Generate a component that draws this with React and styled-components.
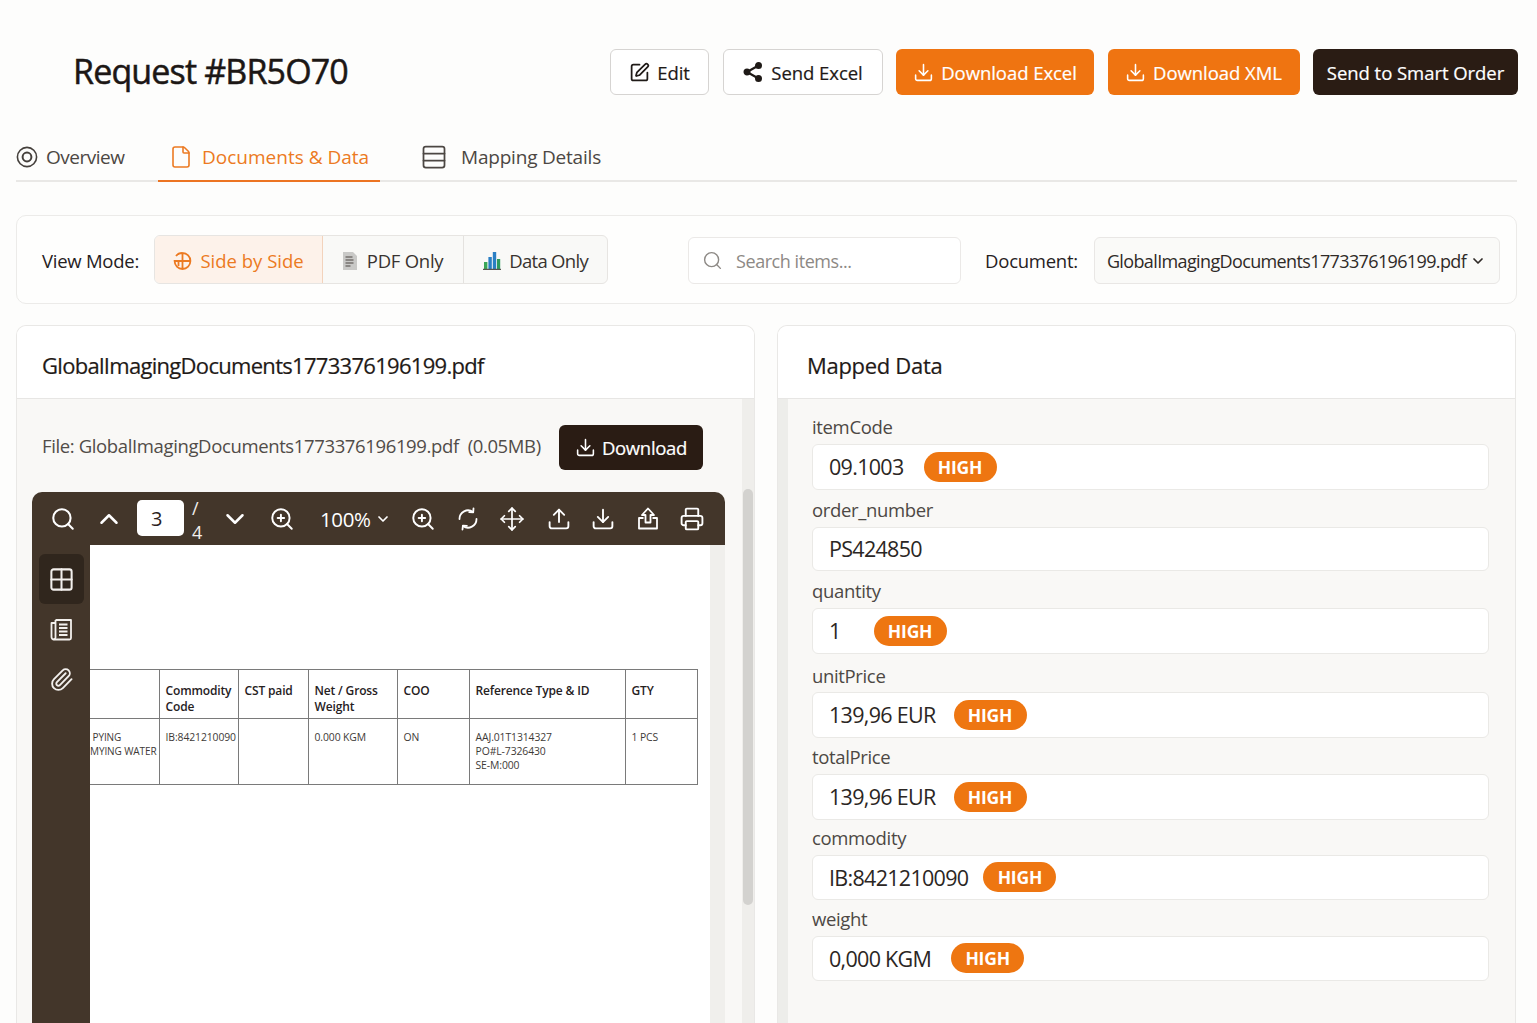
import React from 'react';
import styled, { createGlobalStyle } from 'styled-components';
import { SquarePen, Download, File, Rows3, Search, ChevronUp, ChevronDown, ZoomIn, Move, Upload, Printer, Grid2x2, Paperclip } from 'lucide-react';

const Global = createGlobalStyle`
  html, body { margin: 0; padding: 0; height: 1023px; overflow: hidden; background: #fdfdfc; }
  body { font-family: "Open Sans", "Noto Sans", sans-serif; color: #1f1a17; }
  * { box-sizing: border-box; }
`;

const Page = styled.div`
  height: 1023px;
  overflow: hidden;
  padding: 49px 19px 0 16px;
  display: flex;
  flex-direction: column;
`;
const Header = styled.header`
  display: flex;
  align-items: center;
  justify-content: space-between;
  height: 46px;
  padding-left: 57px;
`;
const Title = styled.h1`
  margin: 0;
  font-size: 34px;
  font-weight: 500;
  letter-spacing: -0.85px;
  color: #1c1715;
  -webkit-text-stroke: 0.5px #1c1715;
  position: relative;
  top: -1px;
`;
const Actions = styled.div`
  display: flex;
  gap: 13.5px;
`;
const ActionButton = styled.button`
  height: 46px;
  width: ${p => p.$w}px;
  display: flex;
  align-items: center;
  justify-content: center;
  gap: 7px;
  border-radius: 6px;
  font: 500 18.5px "Open Sans", sans-serif;
  letter-spacing: -0.05px;
  -webkit-text-stroke: 0.2px currentColor;
  padding: 0;
  border: ${p => (p.$kind === 'outline' ? '1.5px solid #d6d4d2' : 'none')};
  color: ${p => (p.$kind === 'outline' ? '#1f1a17' : '#fff')};
  background: ${p => (p.$kind === 'orange' ? '#ef7411' : p.$kind === 'dark' ? '#2a1c14' : '#fff')};
`;
const Tabs = styled.nav`
  margin: 38px 1px 0 0;
  height: 49px;
  display: flex;
  border-bottom: 2px solid #e9e8e6;
`;
const Tab = styled.div`
  display: flex;
  align-items: center;
  height: 49px;
  width: ${p => p.$w}px;
  margin-right: ${p => p.$mr}px;
  padding-left: ${p => p.$pl}px;
  padding-bottom: ${p => (p.$active ? 0 : 2)}px;
  gap: ${p => p.$gap}px;
  font-size: 19px;
  letter-spacing: ${p => p.$ls}px;
  color: ${p => (p.$active ? '#ec7a22' : '#4c4743')};
  border-bottom: ${p => (p.$active ? '2px solid #ec7422' : 'none')};
`;
const Toolbar = styled.section`
  margin: 33px 1px 0 0;
  height: 89px;
  border: 1.5px solid #ecebe9;
  border-radius: 10px;
  background: #fefefd;
  display: flex;
  align-items: center;
  padding: 0 16px 0 25px;
`;
const ModeLabel = styled.span`
  flex: none;
  font-size: 18.5px;
  letter-spacing: -0.25px;
  font-weight: 500;
  margin-right: 15px;
  padding-top: 2px;
  color: #26211e;
  white-space: nowrap;
`;
const Segments = styled.div`
  flex: none;
  display: flex;
  height: 49px;
  border: 1px solid #e7e5e2;
  border-radius: 6px;
  overflow: hidden;
  background: #f9f9f7;
`;
const Segment = styled.div`
  display: flex;
  align-items: center;
  justify-content: center;
  padding-top: 2px;
  gap: ${p => p.$gap}px;
  width: ${p => p.$w}px;
  font-size: 18.5px;
  letter-spacing: ${p => p.$ls}px;
  color: ${p => (p.$active ? '#ec7a22' : '#38332f')};
  background: ${p => (p.$active ? '#fdf2ea' : 'transparent')};
  border-right: 1px solid ${p => (p.$active ? '#f3d3bc' : '#e4e2df')};
  &:last-child { border-right: none; }
`;
const SearchBox = styled.div`
  flex: none;
  margin: 2px 0 0 80px;
  width: 273px;
  height: 47px;
  border: 1.5px solid #ebe9e7;
  border-radius: 6px;
  display: flex;
  align-items: center;
  gap: 13px;
  padding-left: 13px;
  font-size: 18px;
  letter-spacing: -0.45px;
  color: #8d8985;
  background: #fff;
`;
const DocLabel = styled.span`
  flex: none;
  margin-left: 24px;
  margin-right: 16px;
  padding-top: 2px;
  font-size: 18.5px;
  letter-spacing: -0.25px;
  font-weight: 500;
  color: #26211e;
`;
const DocSelect = styled.div`
  flex: 1;
  min-width: 0;
  margin-top: 2px;
  height: 47px;
  border: 1.5px solid #e9e7e5;
  border-radius: 6px;
  background: #fafaf8;
  display: flex;
  align-items: center;
  justify-content: space-between;
  padding: 0 13px 0 12px;
  font-size: 18px;
  letter-spacing: -0.63px;
  color: #2f2a27;
  white-space: nowrap;
`;
const Panels = styled.main`
  margin-top: 21px;
  display: grid;
  grid-template-columns: 739px 739px;
  column-gap: 22px;
  flex: 1;
  min-height: 0;
`;
const Panel = styled.section`
  height: 720px;
  border: 1.5px solid #e9e8e6;
  border-bottom: none;
  border-radius: 10px 10px 0 0;
  background: #f9f8f6;
  display: flex;
  flex-direction: column;
  overflow: hidden;
`;
const PanelHead = styled.div`
  height: 73px;
  flex: none;
  background: #fff;
  border-bottom: 1.5px solid #e7e6e4;
  display: flex;
  align-items: center;
  padding: 5px 0 0 ${p => p.$pl}px;
  font-size: 22px;
  font-weight: 500;
  letter-spacing: ${p => p.$ls}px;
  -webkit-text-stroke: 0.2px #1f1a17;
  color: #1f1a17;
`;
const LeftBody = styled.div`
  flex: 1;
  display: flex;
  min-height: 0;
`;
const LeftContent = styled.div`
  flex: 1;
  padding: 26px 0 0 15px;
  min-width: 0;
`;
const FileRow = styled.div`
  display: flex;
  align-items: center;
  height: 45px;
  padding: 0 39px 0 10px;
  justify-content: space-between;
`;
const FileText = styled.span`
  font-size: 18.5px;
  letter-spacing: -0.37px;
  color: #514c48;
  white-space: pre;
  padding-bottom: 4px;
`;
const DownloadButton = styled.button`
  width: 144px;
  height: 45px;
  border: none;
  border-radius: 6px;
  background: #2a1c14;
  color: #fff;
  display: flex;
  align-items: center;
  justify-content: center;
  gap: 6px;
  font: 500 18.5px "Open Sans", sans-serif;
  letter-spacing: -0.3px;
  -webkit-text-stroke: 0.2px #fff;
`;
const Scrollbar = styled.div`
  width: 12px;
  flex: none;
  background: #efeeeb;
  position: relative;
`;
const Thumb = styled.div`
  position: absolute;
  left: 1px;
  right: 1px;
  top: 90px;
  height: 416px;
  background: #d3d2cf;
  border-radius: 5px;
`;
const Viewer = styled.div`
  margin-top: 22px;
  width: 693px;
  height: 540px;
  border-radius: 10px 10px 0 0;
  overflow: hidden;
  background: #43362a;
  display: flex;
  flex-direction: column;
`;
const ViewerBar = styled.div`
  height: 53px;
  flex: none;
  display: flex;
  align-items: center;
  color: #fff;
  position: relative;
`;
const BarIcon = styled.span`
  position: absolute;
  left: ${p => p.$x}px;
  top: 50%;
  transform: translate(-50%, -50%);
  display: flex;
`;
const PageInput = styled.div`
  position: absolute;
  left: 105px;
  top: 8px;
  width: 47px;
  height: 36px;
  background: #fff;
  border-radius: 5px;
  color: #2a211b;
  font-size: 20px;
  display: flex;
  align-items: center;
  padding-left: 14px;
`;
const PageTotal = styled.div`
  position: absolute;
  left: 160px;
  top: 4px;
  width: 12px;
  font-size: 18px;
  line-height: 24px;
  color: #f2efec;
`;
const ZoomValue = styled.div`
  position: absolute;
  left: 288px;
  top: 50%;
  transform: translateY(-50%);
  font-size: 20.5px;
  letter-spacing: -0.4px;
  display: flex;
  align-items: center;
  gap: 4px;
  color: #fff;
`;
const ViewerMain = styled.div`
  flex: 1;
  display: flex;
  min-height: 0;
`;
const Side = styled.div`
  width: 58px;
  flex: none;
  display: flex;
  flex-direction: column;
  align-items: center;
  padding-top: 9px;
  color: #f3f0ed;
`;
const SideButton = styled.div`
  width: 45px;
  height: ${p => p.$h}px;
  border-radius: 6px;
  background: ${p => (p.$active ? '#30261d' : 'transparent')};
  display: flex;
  align-items: center;
  justify-content: center;
`;
const Sheet = styled.div`
  flex: 1;
  background: #fff;
  padding-top: 124px;
`;
const PdfTable = styled.table`
  width: 607px;
  height: 116px;
  table-layout: fixed;
  border-collapse: collapse;
  font-family: "Open Sans", sans-serif;
  th, td { border: 1.5px solid #7a7a7a; vertical-align: top; text-align: left; white-space: nowrap; }
  th { height: 49px; padding: 13px 0 0 6px; font-size: 12px; line-height: 16px; font-weight: 600; color: #26211e; letter-spacing: -0.15px; }
  td { padding: 11px 0 0 6px; font-size: 10.4px; line-height: 14px; color: #3e3a37; letter-spacing: -0.1px; }
  td:first-child { padding-left: 0; border-left: none; font-size: 10px; letter-spacing: -0.1px; }
  th:first-child { border-left: none; }
`;
const PageGutter = styled.div`
  width: 15px;
  flex: none;
  background: #f0efec;
`;
const RightBody = styled.div`
  flex: 1;
  display: flex;
  min-height: 0;
`;
const Strip = styled.div`
  width: 10px;
  flex: none;
  background: #ededea;
`;
const Fields = styled.div`
  flex: 1;
  padding: 15px 26px 0 24px;
`;
const Field = styled.div`
  height: ${p => p.$h}px;
`;
const FieldLabel = styled.div`
  font-size: 18.5px;
  line-height: 25px;
  letter-spacing: -0.35px;
  color: #4d4844;
  margin-bottom: ${p => p.$mb}px;
`;
const FieldBox = styled.div`
  height: ${p => p.$h}px;
  border: 1.5px solid #eae9e6;
  border-radius: 6px;
  background: #fff;
  display: flex;
  align-items: center;
  padding: 0 0 1px 16px;
  gap: ${p => p.$gap}px;
  font-size: 21.5px;
  letter-spacing: -0.7px;
  color: #2b2623;
`;
const Badge = styled.span`
  width: 73px;
  height: 30px;
  border-radius: 15px;
  background: #ee7611;
  color: #fff;
  font-size: 17.5px;
  font-weight: 700;
  letter-spacing: -0.2px;
  display: flex;
  align-items: center;
  justify-content: center;
`;

const Ico = ({ I, s = 24, w = 2 }) => <I size={s} strokeWidth={w} />;

const ShareIcon = () => (
  <svg width="22" height="22" viewBox="0 0 22 22" fill="#1f1a17" stroke="#1f1a17" strokeWidth="2.2">
    <path d="M16.5 4.5 5 11l11.5 6.5" fill="none" />
    <circle cx="16.5" cy="4.5" r="2.4" /><circle cx="5" cy="11" r="2.4" /><circle cx="16.5" cy="17.5" r="2.4" />
  </svg>
);
const TargetIcon = () => (
  <svg width="22" height="22" viewBox="0 0 22 22" fill="none" stroke="#45403c" strokeWidth="1.6">
    <circle cx="11" cy="11" r="9.6" /><circle cx="11" cy="11" r="4.4" strokeWidth="2" />
  </svg>
);
const SplitIcon = () => (
  <svg width="19" height="20" viewBox="0 0 19 20" fill="none" stroke="#ec7a22" strokeWidth="1.8">
    <path d="M3 5A7.9 7.9 0 0 1 9.5 2a7.9 7.9 0 0 1 7.9 8 7.9 7.9 0 0 1-7.9 8A7.9 7.9 0 0 1 1.6 10H17.4M9.5 2v16" />
    <path d="M5.5 10v5" />
  </svg>
);
const PdfIcon = () => (
  <svg width="14" height="18" viewBox="0 0 14 18">
    <path d="M0 0h10l4 4v14H0z" fill="#c9c9c7" />
    <path d="M2.5 5h7M2.5 8h8M2.5 11h8M2.5 14h5" stroke="#75726f" strokeWidth="1.3" />
  </svg>
);
const ChartIcon = () => (
  <svg width="18" height="18" viewBox="0 0 18 18">
    <rect x="1" y="10" width="3.4" height="7" fill="#3aa657" />
    <rect x="5.4" y="5" width="3.4" height="12" fill="#2a7fc4" />
    <rect x="9.8" y="0" width="3.4" height="17" fill="#2a7fc4" />
    <rect x="14" y="7" width="3.2" height="10" fill="#2f9a5f" />
    <rect x="0" y="16.8" width="18" height="1.2" fill="#57534f" />
  </svg>
);
const BookIcon = () => (
  <svg width="25" height="25" viewBox="0 0 25 25" fill="none" stroke="#f3f0ed" strokeWidth="1.8" strokeLinejoin="round">
    <path d="M6.5 3h15.5v18a1.5 1.5 0 0 1-1.5 1.5H5A2.5 2.5 0 0 1 2.5 20V6H6.5" />
    <path d="M6.5 3v17a2 2 0 0 1-2 2.4" />
    <path d="M10 7.5h8.5M10 11h8.5M10 14.5h8.5M10 18h8.5" />
  </svg>
);
const SyncIcon = () => (
  <svg width="24" height="24" viewBox="0 0 24 24" fill="none" stroke="#fff" strokeWidth="1.8" strokeLinecap="round" strokeLinejoin="round">
    <path d="M20.5 12a8.5 8.5 0 0 1-13.5 7" />
    <path d="M3.5 12A8.5 8.5 0 0 1 17 5" />
    <path d="M17.5 1.5 17.2 5.4l-4-.2" />
    <path d="M6.5 22.5l.4-3.9 4 .2" />
  </svg>
);
const BoxUpIcon = () => (
  <svg width="25" height="25" viewBox="0 0 25 25" fill="none" stroke="#fff" strokeWidth="1.8" strokeLinejoin="round">
    <path d="M12.5 2 6.5 8.5H10V16h5V8.5h3.5z" />
    <path d="M8 11.5H3.5V22h18V11.5H17" />
  </svg>
);

const toolbarIcons = [
  [31, Search, 26, 1.9], [77, ChevronUp, 30, 2], [203, ChevronDown, 30, 2], [250, ZoomIn, 26, 1.8],
  [391, ZoomIn, 26, 1.8], [480, Move, 26, 1.6], [527, Upload, 25, 1.8], [571, Download, 25, 1.8], [660, Printer, 25, 1.8],
];

const fields = [
  { label: 'itemCode', value: '09.1003', high: true, gap: 20, h: 83, box: 46 },
  { label: 'order_number', value: 'PS424850', gap: 0, h: 81, box: 44 },
  { label: 'quantity', value: '1', high: true, gap: 33, h: 85, box: 46 },
  { label: 'unitPrice', value: '139,96 EUR', high: true, gap: 18, h: 81, mb: 4, box: 46 },
  { label: 'totalPrice', value: '139,96 EUR', high: true, gap: 18, h: 81, box: 46 },
  { label: 'commodity', value: 'IB:8421210090', high: true, gap: 15, h: 81, box: 45 },
  { label: 'weight', value: '0,000 KGM', high: true, gap: 20, h: 81, box: 45 },
];

export default function App() {
  return (
    <Page>
      <Global />
      <Header>
        <Title>Request #BR5O70</Title>
        <Actions>
          <ActionButton $kind="outline" $w={99}><Ico I={SquarePen} s={21} />Edit</ActionButton>
          <ActionButton $kind="outline" $w={160}><ShareIcon />Send Excel</ActionButton>
          <ActionButton $kind="orange" $w={198}><Ico I={Download} s={21} w={1.8} />Download Excel</ActionButton>
          <ActionButton $kind="orange" $w={192}><Ico I={Download} s={21} w={1.8} />Download XML</ActionButton>
          <ActionButton $kind="dark" $w={205}>Send to Smart Order</ActionButton>
        </Actions>
      </Header>
      <Tabs>
        <Tab $w={109} $mr={33} $pl={0} $gap={8} $ls={-0.5}><TargetIcon />Overview</Tab>
        <Tab $active $w={222} $mr={40} $pl={11} $gap={9} $ls={0}><Ico I={File} s={24} w={1.6} />Documents &amp; Data</Tab>
        <Tab $w={220} $mr={0} $pl={0} $gap={13} $ls={-0.2}><Ico I={Rows3} s={28} w={1.5} />Mapping Details</Tab>
      </Tabs>
      <Toolbar>
        <ModeLabel>View Mode:</ModeLabel>
        <Segments>
          <Segment $active $w={168} $gap={8} $ls={0}><SplitIcon />Side by Side</Segment>
          <Segment $w={141} $gap={10} $ls={-0.25}><PdfIcon />PDF Only</Segment>
          <Segment $w={143} $gap={8} $ls={-0.7}><ChartIcon />Data Only</Segment>
        </Segments>
        <SearchBox><Ico I={Search} s={21} w={1.6} />Search items...</SearchBox>
        <DocLabel>Document:</DocLabel>
        <DocSelect>GlobalImagingDocuments1773376196199.pdf<ChevronDown size={16} strokeWidth={2.6} /></DocSelect>
      </Toolbar>
      <Panels>
        <Panel>
          <PanelHead $pl={25} $ls={-0.7}>GlobalImagingDocuments1773376196199.pdf</PanelHead>
          <LeftBody>
            <LeftContent>
              <FileRow>
                <FileText>File: GlobalImagingDocuments1773376196199.pdf  (0.05MB)</FileText>
                <DownloadButton><Ico I={Download} s={21} w={1.8} />Download</DownloadButton>
              </FileRow>
              <Viewer>
                <ViewerBar>
                  {toolbarIcons.map(([x, I, s, w], i) => (
                    <BarIcon key={i} $x={x}><I size={s} strokeWidth={w} /></BarIcon>
                  ))}
                  <BarIcon $x={436}><SyncIcon /></BarIcon>
                  <BarIcon $x={616}><BoxUpIcon /></BarIcon>
                  <PageInput>3</PageInput>
                  <PageTotal>/<br />4</PageTotal>
                  <ZoomValue>100%<ChevronDown size={16} strokeWidth={2.6} /></ZoomValue>
                </ViewerBar>
                <ViewerMain>
                  <Side>
                    <SideButton $active $h={50}><Grid2x2 size={27} strokeWidth={1.8} /></SideButton>
                    <SideButton $h={50}><BookIcon /></SideButton>
                    <SideButton $h={50}><Paperclip size={25} strokeWidth={1.8} /></SideButton>
                  </Side>
                  <Sheet>
                    <PdfTable>
                      <colgroup>
                        <col width="69" /><col width="79" /><col width="70" /><col width="89" /><col width="72" /><col width="156" /><col width="72" />
                      </colgroup>
                      <thead>
                        <tr>
                          <th /><th>Commodity<br />Code</th><th>CST paid</th><th>Net / Gross<br />Weight</th><th>COO</th><th>Reference Type &amp; ID</th><th>GTY</th>
                        </tr>
                      </thead>
                      <tbody>
                        <tr>
                          <td>&nbsp;PYING<br />MYING WATER</td><td>IB:8421210090</td><td /><td>0.000 KGM</td><td>ON</td><td>AAJ.01T1314327<br />PO#L-7326430<br />SE-M:000</td><td>1 PCS</td>
                        </tr>
                      </tbody>
                    </PdfTable>
                  </Sheet>
                  <PageGutter />
                </ViewerMain>
              </Viewer>
            </LeftContent>
            <Scrollbar><Thumb /></Scrollbar>
          </LeftBody>
        </Panel>
        <Panel>
          <PanelHead $pl={29} $ls={-0.3}>Mapped Data</PanelHead>
          <RightBody>
            <Strip />
            <Fields>
              {fields.map(f => (
                <Field key={f.label} $h={f.h}>
                  <FieldLabel $mb={f.mb ?? 5}>{f.label}</FieldLabel>
                  <FieldBox $h={f.box} $gap={f.gap}>
                    {f.value}
                    {f.high && <Badge>HIGH</Badge>}
                  </FieldBox>
                </Field>
              ))}
            </Fields>
          </RightBody>
        </Panel>
      </Panels>
    </Page>
  );
}
